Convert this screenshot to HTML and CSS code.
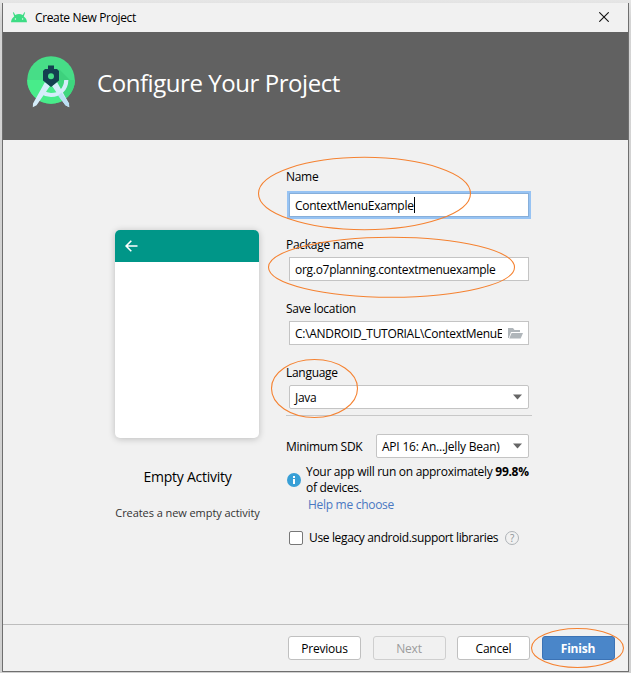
FILE: index.html
```html
<!DOCTYPE html>
<html lang="en">
<head>
<meta charset="utf-8">
<title>Create New Project</title>
<link rel="stylesheet" href="styles.css">
</head>
<body>
<div class="window">
  <div class="titlebar">
    <svg class="droid" width="16" height="11" viewBox="0 0 16 11"><path d="M0 10.3a8 7.6 0 0 1 3.2-5.900L1.900.600l.8-.4 1.500 2.700a9 9 0 0 1 7.600 0L13.300.200l.8.4-1.300 3.800a8 7.600 0 0 1 3.200 5.900z" fill="#3ddc84"/><circle cx="4.4" cy="7" r=".7" fill="#e6fff0"/><circle cx="11.6" cy="7" r=".7" fill="#e6fff0"/></svg>
    <span class="caption">Create New Project</span>
    <svg class="close" width="10" height="10" viewBox="0 0 10 10"><path d="M.3.3l9.4 9.4M9.7.3L.3 9.7" stroke="#111" stroke-width="1.1"/></svg>
  </div>
  <header class="header">
    <svg class="logo" width="48" height="53" viewBox="0 0 48 53">
      <circle cx="24" cy="24" r="23.8" fill="#47dd87"/>
      <path d="M.2 24a23.8 23.8 0 0 0 47.6 0z" fill="#48ec8a"/>
      <path d="M32 13l11 11H47.8a24 24 0 0 1-10 19.500L24 30z" fill="#38c976" opacity=".6"/>
      <path d="M18 26L6 47.500l-.2 3.800L9.600 49.200 23 30zM30 26L42 47.500l.2 3.800L38.400 49.200 25 30z" fill="#d5edfa"/>
      <path d="M39.300 24c-.3 9-6.300 15-15.300 15-3 0-6-1-8-2.500" fill="none" stroke="#d5edfa" stroke-width="4.200"/>
      <path d="M31 39.500l3.600-3L42 47.500l.2 3.800-3.800-2.100z" fill="#bcdff4"/>
      <path d="M21 9.500h6v3.500h3l2 2v9.500L24 31l-8-6.500V15l2-2h3z" fill="#143f50"/>
      <circle cx="24" cy="20.300" r="3" fill="#47dd87"/>
    </svg>
    <h1 class="heading">Configure Your Project</h1>
  </header>
  <main class="content">
    <section class="preview">
      <div class="card"><div class="appbar"><svg width="13" height="12" viewBox="0 0 13 12"><path d="M6.300.8L1.100 6l5.200 5.200M1.300 6H12.500" fill="none" stroke="#fff" stroke-width="1.600"/></svg></div></div>
      <div class="template">Empty Activity</div>
      <div class="description">Creates a new empty activity</div>
    </section>
    <section class="form">
      <div class="label">Name</div>
      <div class="field focused"><span class="value">ContextMenuExample</span><i class="caret"></i></div>
      <div class="label">Package name</div>
      <div class="field"><span class="value">org.o7planning.contextmenuexample</span></div>
      <div class="label">Save location</div>
      <div class="field"><span class="value path">C:\ANDROID_TUTORIAL\ContextMenuExample</span>
        <svg class="folder" width="15" height="12" viewBox="0 0 15 12"><path d="M0 11V1h5l1.500 2H12v2H3L.8 11z" fill="#b0b6ba"/><path d="M3.600 6H15l-2.300 5.500H1.300z" fill="#b0b6ba"/></svg></div>
      <div class="label">Language</div>
      <div class="field combo"><span class="value">Java</span><svg class="arrow" width="9" height="6" viewBox="0 0 9 6"><path d="M0 .5h9L4.500 5.500z" fill="#666"/></svg></div>
      <div class="separator"></div>
      <div class="sdk"><span class="value">Minimum SDK</span><div class="field combo small"><span class="api">API 16: An...Jelly Bean)</span><svg class="arrow" width="9" height="6" viewBox="0 0 9 6"><path d="M0 .5h9L4.500 5.500z" fill="#666"/></svg></div></div>
      <div class="info">
        <svg width="14" height="14" viewBox="0 0 14 14"><circle cx="7" cy="7" r="7" fill="#389fd6"/><path d="M6 3h2v2H6zM6 6h2v5H6z" fill="#fff"/></svg>
        <div class="message"><div>Your app will run on approximately <b>99.8%</b></div><div>of devices.</div></div>
      </div>
      <a class="link">Help me choose</a>
      <div class="legacy"><span class="checkbox"></span><span class="option">Use legacy android.support libraries</span><span class="help">?</span></div>
    </section>
  </main>
  <footer class="footer">
    <div class="button">Previous</div>
    <div class="button disabled">Next</div>
    <div class="button">Cancel</div>
    <div class="button primary">Finish</div>
  </footer>
</div>
<svg class="marks" width="631" height="673" viewBox="0 0 631 673">
  <ellipse cx="364.500" cy="193.500" rx="106" ry="36.200"/>
  <ellipse cx="391.500" cy="267.300" rx="123" ry="30"/>
  <ellipse cx="314.500" cy="388.500" rx="43" ry="29"/>
  <ellipse cx="577.500" cy="648" rx="46" ry="19.500"/>
</svg>
</body>
</html>
```

FILE: styles.css
```css
* { box-sizing: border-box; }
body {
  margin: 0;
  height: 673px;
  overflow: hidden;
  padding: 3px 2px 1px;
  background: linear-gradient(#e6e6e6, #d4d4d4 20px, #d0d0d0);
  font: 12px/16px "Open Sans", "Noto Sans", sans-serif;
  letter-spacing: -.29px;
  color: #000;
  white-space: nowrap;
}
.window {
  width: 627px;
  height: 669px;
  display: flex;
  flex-direction: column;
  background: #f1f1f1;
  border: 1px solid #6f6f6f;
  border-top: 0;
}
.titlebar { height: 29px; flex: none; display: flex; align-items: center; padding: 0 19px 0 8px; }
.caption { margin-left: 8px; letter-spacing: -.36px; }
.close { margin: 0 0 1px auto; }
.header { height: 108px; flex: none; display: flex; background: #616161; color: #fff; padding: 24px 0 0 24px; }
.heading { margin: 11px 0 0 22px; font-size: 24px; line-height: 32px; font-weight: 400; letter-spacing: -.44px; }
.content { height: 484px; flex: none; display: flex; }
.preview { width: 283px; padding: 90px 26px 0 112px; }
.card { width: 144px; height: 208px; border-radius: 5px; background: #fff; box-shadow: 0 1px 7px rgba(0, 0, 0, .22); overflow: hidden; }
.appbar { height: 32px; background: #009688; padding: 10px 0 0 10px; }
.appbar svg { display: block; }
.template { margin-top: 29px; text-align: center; font-size: 14px; line-height: 20px; letter-spacing: -.25px; }
.description { margin: 18px -2px 0; text-align: center; font-size: 11px; line-height: 16px; letter-spacing: -.07px; color: #333; }
.form { width: 246px; padding-top: 29px; }
.label { height: 16px; margin-top: 20px; }
.label:first-child { margin: 0 0 8px; }
.field { width: 240px; height: 24px; margin: 4px 0 0 3px; display: flex; align-items: center; background: #fff; border: 1px solid #c4c4c4; padding-left: 5px; }
.value { padding-top: 1px; }
.focused { border-color: #87afda; box-shadow: 0 0 0 2px #97c3f3; }
.caret { width: 1px; height: 16px; background: #000; }
.path { width: 207px; overflow: hidden; }
.folder { flex: none; margin-left: 6px; }
.combo { border-radius: 2px; justify-content: space-between; padding-right: 6px; }
.separator { height: 1px; margin-top: 6px; background: #c8c8c8; }
.sdk { display: flex; align-items: center; justify-content: space-between; height: 24px; margin-top: 18px; padding-right: 3px; }
.small { width: 153px; margin: 0; }
.api { padding-top: 1px; letter-spacing: -.22px; }
.info { display: flex; align-items: center; gap: 5px; margin: 6px 0 0 1px; }
.info svg { flex: none; }
.link { display: block; margin: 1px 0 0 22px; color: #4a78c2; }
.legacy { display: flex; align-items: center; margin: 17px 0 0 3px; }
.checkbox { width: 14px; height: 14px; flex: none; border: 1px solid #777; border-radius: 2px; background: #fff; }
.option { margin-left: 6px; width: 189px; letter-spacing: -.35px; }
.help { width: 14px; height: 14px; flex: none; margin-left: 7px; border: 1px solid #aeb3b7; border-radius: 50%; color: #8c9196; font-size: 10px; line-height: 12px; text-align: center; }
.footer { height: 47px; flex: none; display: flex; gap: 12px; border-top: 1px solid #bdbdbd; padding: 11px 0 0 285px; }
.button { width: 73px; height: 24px; display: flex; align-items: center; justify-content: center; border: 1px solid #c0c0c0; border-radius: 3px; background: #fff; padding-top: 1px; letter-spacing: -.2px; }
.button + .button { margin-left: -.5px; }
.disabled { background: #f1f1f1; border-color: #cfcfcf; color: #9c9c9c; }
.primary { background: #4a86c9; border-color: #3c73b5; color: #fff; font-weight: 700; }
.marks { position: absolute; left: 0; top: 0; pointer-events: none; }
.marks ellipse { fill: none; stroke: #f58231; stroke-width: 1.1; }
```
